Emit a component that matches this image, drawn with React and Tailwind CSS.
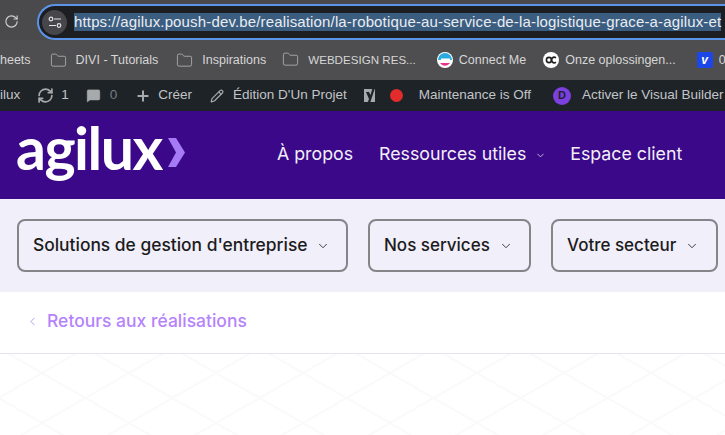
import { ChevronDown, ChevronLeft, Folder, Plus, Pencil, RefreshCw, RotateCw, MessageSquare } from "lucide-react";

function Bookmark({ label, className, labelClass = "" }) {
  return (
    <div className={`flex items-center gap-[9px] ${className}`}>
      <Folder size={17} strokeWidth={1} className="text-[#c4c4c4]" />
      <span className={labelClass}>{label}</span>
    </div>
  );
}

function FilterButton({ label, className, labelClass = "" }) {
  return (
    <button className={`flex h-[53px] items-center gap-[9px] whitespace-nowrap rounded-lg border-2 border-[#858489] pl-[14px] text-[17px] font-medium text-[#1c1b20] ${className}`}>
      <span className={labelClass}>{label}</span>
      <ChevronDown size={14} strokeWidth={1.6} className="text-[#333]" />
    </button>
  );
}

export default function App() {
  return (
    <div className="flex h-[435px] w-[725px] flex-col overflow-hidden bg-white font-['Inter',sans-serif]">
      {/* browser toolbar */}
      <div className="flex h-10 shrink-0 items-start bg-[#4a4a4c] pt-1 font-['Liberation_Sans',sans-serif]">
        <RotateCw size={15} strokeWidth={1.8} className="ml-[4px] mt-[10px] shrink-0 text-[#d0d0d0]" />
        <div className="ml-[18px] flex h-[36px] flex-1 items-center rounded-l-full border-2 border-r-0 border-[#5b94e9] bg-[#1d1e21] pl-[3px]">
          <div className="flex h-[25px] w-[25px] shrink-0 items-center justify-center rounded-full bg-[#47464a]">
            <svg width="14" height="13" viewBox="0 0 14 13" fill="none" stroke="#e3e3e3" strokeWidth="1.2">
              <circle cx="3" cy="3" r="1.8" />
              <path d="M6 3h7M1 9.500h7" />
              <circle cx="11" cy="9.500" r="1.8" />
            </svg>
          </div>
          <span className="ml-[7px] whitespace-nowrap bg-[#3b5d80] text-[15px] leading-[18px] tracking-[0.15px] text-[#e9edf2]">
            https://agilux.poush-dev.be/realisation/la-robotique-au-service-de-la-logistique-grace-a-agilux-et
          </span>
        </div>
      </div>

      {/* bookmarks */}
      <div className="flex h-10 shrink-0 items-center overflow-hidden whitespace-nowrap bg-[#4e4e50] text-[12.5px] text-[#d6d6d6] font-['Liberation_Sans',sans-serif]">
        <span>heets</span>
        <Bookmark label="DIVI - Tutorials" className="ml-[19px]" />
        <Bookmark label="Inspirations" className="ml-[18px]" />
        <Bookmark label="WEBDESIGN RES..." className="ml-[16px]" labelClass="text-[11.6px]" />
        <div className="ml-[21px] flex items-center gap-[6px]">
          <svg width="16" height="16" viewBox="0 0 16 16">
            <circle cx="8" cy="8" r="8" fill="#fff" />
            <path d="M1 8a7 7 0 0 1 14 0z" fill="#2aa9e0" />
            <path d="M3 11a6 6 0 0 0 10 0z" fill="#e8358c" />
            <rect x="4" y="6.5" width="9" height="2" fill="#fff" />
          </svg>
          <span>Connect Me</span>
        </div>
        <div className="ml-[17px] flex items-center gap-[6px]">
          <svg width="16" height="16" viewBox="0 0 16 16">
            <circle cx="8" cy="8" r="8" fill="#fff" />
            <circle cx="6" cy="8" r="2.6" fill="none" stroke="#222" strokeWidth="1.6" />
            <path d="M13 5.8a2.8 2.8 0 1 0 0 4.4" fill="none" stroke="#222" strokeWidth="1.6" />
          </svg>
          <span>Onze oplossingen...</span>
        </div>
        <div className="ml-[21px] flex shrink-0 items-center gap-[6px]">
          <div className="flex h-4 w-4 items-center justify-center rounded-[2px] bg-[#1c46e8] text-[12px] font-bold italic text-white">v</div>
          <span>0</span>
        </div>
      </div>

      {/* wp admin bar */}
      <div className="flex h-[31px] shrink-0 items-center overflow-hidden whitespace-nowrap bg-[#1d2327] text-[13.500px] text-[#c3c4c7] font-['Liberation_Sans',sans-serif]">
        <span>ilux</span>
        <RefreshCw size={17} strokeWidth={2.4} className="ml-[17px] shrink-0 text-[#a7aaad]" />
        <span className="ml-[7px]">1</span>
        <MessageSquare size={15} fill="#a7aaad" strokeWidth={1} className="ml-[17px] shrink-0 text-[#a7aaad]" />
        <span className="ml-[9px] text-[#787c82]">0</span>
        <Plus size={16} strokeWidth={3} className="ml-[18px] shrink-0 text-[#a7aaad]" />
        <span className="ml-[7px]">Créer</span>
        <Pencil size={14} strokeWidth={2} className="ml-[18px] shrink-0 text-[#a7aaad]" />
        <span className="ml-[9px]">Édition D'Un Projet</span>
        <svg width="17" height="19" viewBox="0 0 17 19" className="ml-[15px] shrink-0">
          <path d="M2 3h11v13H2z" fill="#a7aaad" />
          <path d="M4 6l3 7-1.5 4h2.5l5-15h-2.500L8.500 9 7 6z" fill="#1d2327" />
        </svg>
        <div className="ml-[11px] h-[13px] w-[13px] shrink-0 rounded-full bg-[#e22b2b]" />
        <span className="ml-[16px]">Maintenance is Off</span>
        <div className="ml-[22px] flex h-[18px] w-[18px] shrink-0 items-center justify-center rounded-full bg-[#7c3fe0] text-[11px] font-bold text-[#1d2327]">D</div>
        <span className="ml-[11px]">Activer le Visual Builder</span>
      </div>

      {/* site header */}
      <header className="flex h-[88px] shrink-0 items-center bg-[#3a0888] pb-[2px] text-[17.750px] text-[#f3effa]">
        <div className="ml-[16px] flex w-[171px] items-center">
          <span className="mb-[14px] font-['Lato',sans-serif] text-[59px] font-bold leading-none tracking-[-1.5px] text-white">agilux</span>
          <svg width="17" height="29" viewBox="0 0 17 29" className="mb-[3px] ml-[6px] shrink-0">
            <polygon points="0,0 8,0 17,14.500 8,29 0,29 8,14.500" fill="#a67af4" />
          </svg>
        </div>
        <span className="ml-[90px]">À propos</span>
        <span className="ml-[26px]">Ressources utiles</span>
        <ChevronDown size={11} strokeWidth={1.6} className="ml-[9px] mt-[2px]" />
        <span className="ml-[24px]">Espace client</span>
      </header>

      {/* filters */}
      <div className="flex h-[93px] shrink-0 items-center gap-5 bg-[#f1eff9] pl-[17px]">
        <FilterButton label="Solutions de gestion d'entreprise" className="w-[331px]" labelClass="text-[17.400px]" />
        <FilterButton label="Nos services" className="w-[163px]" />
        <FilterButton label="Votre secteur" className="w-[167px]" />
      </div>

      {/* back link */}
      <div className="flex h-[62px] shrink-0 items-center gap-[8px] border-b border-[#e5e3ee] pb-[2px] pl-[26px] text-[17.500px] font-medium text-[#b583fb]">
        <ChevronLeft size={13} strokeWidth={1.6} />
        <span>Retours aux réalisations</span>
      </div>

      {/* faint background pattern */}
      <svg className="min-h-0 w-full flex-1">
        <defs>
          <pattern id="lattice" width="87" height="50" patternUnits="userSpaceOnUse" patternTransform="translate(42 19)">
            <path d="M0 0L87 50M87 0L0 50" fill="none" stroke="#fafafa" strokeWidth="2" />
          </pattern>
        </defs>
        <rect width="100%" height="100%" fill="url(#lattice)" />
      </svg>
    </div>
  );
}
